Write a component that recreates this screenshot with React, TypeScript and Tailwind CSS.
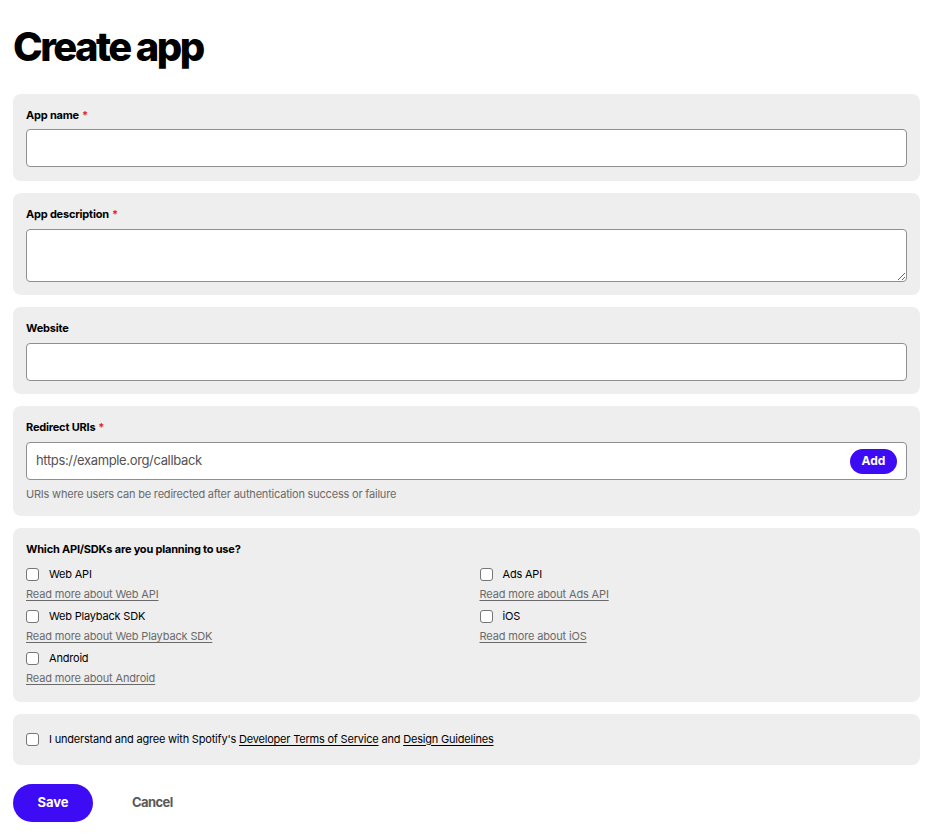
import React from "react";

const font = { fontFamily: "Inter, 'Noto Sans', 'Liberation Sans', sans-serif" };

function Req() {
  return <span className="text-[#e22134] ml-[3px]">*</span>;
}

function Card({ children, className = "" }: { children: React.ReactNode; className?: string }) {
  return <div className={`bg-[#eeeeee] rounded-[8px] px-[13px] ${className}`}>{children}</div>;
}

function Label({ children }: { children: React.ReactNode }) {
  return <div className="text-[11px] leading-[16px] font-bold text-black tracking-[-0.2px]">{children}</div>;
}

function Checkbox() {
  return <span className="inline-block w-[13px] h-[13px] border border-[#767676] rounded-[3px] bg-white shrink-0" />;
}

function Item({ label, link }: { label: string; link: string }) {
  return (
    <div>
      <div className="flex items-center h-[20px] gap-[10px]">
        <Checkbox />
        <span className="text-[11px] tracking-[-0.2px] text-black">{label}</span>
      </div>
      <div className="mt-[2px] text-[11px] leading-[16px] tracking-[-0.15px] text-[#6a6a6a] underline underline-offset-2">{link}</div>
    </div>
  );
}

export default function App() {
  return (
    <div className="bg-white min-h-[834px] pl-[13px] pr-[15px] pt-[27px]" style={font}>
      <h1 className="text-[40px] leading-[40px] font-extrabold tracking-[-2.6px] text-black">Create app</h1>
      <div className="mt-[27px] flex flex-col gap-[12px]">
        <Card className="pt-[13px] pb-[14px]">
          <Label>
            App name<Req />
          </Label>
          <input className="mt-[6px] block w-full h-[38px] bg-white border border-[#8f8f8f] rounded-[4px] outline-none px-[9px]" />
        </Card>
        <Card className="pt-[13px] pb-[13px]">
          <Label>
            App description<Req />
          </Label>
          <textarea className="mt-[7px] block w-full h-[53px] bg-white border border-[#8f8f8f] rounded-[4px] outline-none px-[9px]" />
        </Card>
        <Card className="pt-[13px] pb-[13px]">
          <Label>Website</Label>
          <input className="mt-[7px] block w-full h-[38px] bg-white border border-[#8f8f8f] rounded-[4px] outline-none px-[9px]" />
        </Card>
        <Card className="pt-[13px] pb-[14px]">
          <Label>
            Redirect URIs<Req />
          </Label>
          <div className="mt-[7px] flex items-center h-[38px] bg-white border border-[#8f8f8f] rounded-[4px] pl-[9px] pr-[9px]">
            <span className="flex-1 text-[13px] tracking-[-0.35px] text-[#535353]">https://example.org/callback</span>
            <button className="h-[25px] w-[47px] rounded-full bg-[#3d0cf5] text-white text-[12px] font-bold">Add</button>
          </div>
          <div className="mt-[6px] text-[11px] leading-[16px] tracking-[-0.2px] text-[#6a6a6a]">
            URIs where users can be redirected after authentication success or failure
          </div>
        </Card>
        <Card className="pt-[13px] pb-[16px]">
          <Label>Which API/SDKs are you planning to use?</Label>
          <div className="mt-[7px] grid grid-cols-2 gap-x-[26px] gap-y-[4px]">
            <Item label="Web API" link="Read more about Web API" />
            <Item label="Ads API" link="Read more about Ads API" />
            <Item label="Web Playback SDK" link="Read more about Web Playback SDK" />
            <Item label="iOS" link="Read more about iOS" />
            <Item label="Android" link="Read more about Android" />
          </div>
        </Card>
        <Card className="pt-[15px] pb-[16px]">
          <div className="flex items-center h-[20px] gap-[10px]">
            <Checkbox />
            <span className="text-[11px] tracking-[-0.2px] text-black">
              I understand and agree with Spotify's{" "}
              <span className="underline underline-offset-2">Developer Terms of Service</span> and{" "}
              <span className="underline underline-offset-2">Design Guidelines</span>
            </span>
          </div>
        </Card>
      </div>
      <div className="mt-[19px] flex items-center">
        <button className="h-[38px] w-[80px] rounded-full bg-[#3d0cf5] text-white text-[13px] font-bold">Save</button>
        <button className="ml-[39px] text-[13px] font-bold tracking-[-0.6px] text-[#5a5a5a]">Cancel</button>
      </div>
    </div>
  );
}
